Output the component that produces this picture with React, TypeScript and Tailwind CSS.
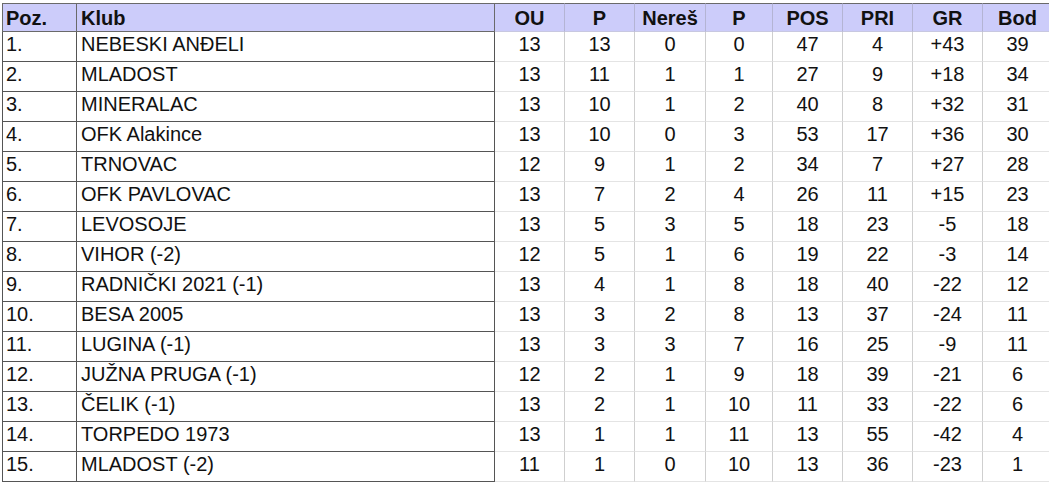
import React from "react";

const rows: [string, string, string, string, string, string, string, string, string, string][] = [
  ["1.", "NEBESKI ANĐELI", "13", "13", "0", "0", "47", "4", "+43", "39"],
  ["2.", "MLADOST", "13", "11", "1", "1", "27", "9", "+18", "34"],
  ["3.", "MINERALAC", "13", "10", "1", "2", "40", "8", "+32", "31"],
  ["4.", "OFK Alakince", "13", "10", "0", "3", "53", "17", "+36", "30"],
  ["5.", "TRNOVAC", "12", "9", "1", "2", "34", "7", "+27", "28"],
  ["6.", "OFK PAVLOVAC", "13", "7", "2", "4", "26", "11", "+15", "23"],
  ["7.", "LEVOSOJE", "13", "5", "3", "5", "18", "23", "-5", "18"],
  ["8.", "VIHOR (-2)", "12", "5", "1", "6", "19", "22", "-3", "14"],
  ["9.", "RADNIČKI 2021 (-1)", "13", "4", "1", "8", "18", "40", "-22", "12"],
  ["10.", "BESA 2005", "13", "3", "2", "8", "13", "37", "-24", "11"],
  ["11.", "LUGINA (-1)", "13", "3", "3", "7", "16", "25", "-9", "11"],
  ["12.", "JUŽNA PRUGA (-1)", "12", "2", "1", "9", "18", "39", "-21", "6"],
  ["13.", "ČELIK (-1)", "13", "2", "1", "10", "11", "33", "-22", "6"],
  ["14.", "TORPEDO 1973", "13", "1", "1", "11", "13", "55", "-42", "4"],
  ["15.", "MLADOST (-2)", "11", "1", "0", "10", "13", "36", "-23", "1"],
];

const heads = ["OU", "P", "Nereš", "P", "POS", "PRI", "GR", "Bod"];
const numW = [70, 70, 71, 67, 70, 70, 70, 70];

export default function App() {
  return (
    <div
      className="w-[1049px] h-[488px] overflow-hidden bg-white pl-[2px] pt-[3px] text-[#111]"
      style={{ fontFamily: '"Liberation Sans", Arial, sans-serif' }}
    >
      <table className="border-separate border-spacing-0 text-[20px] leading-none w-[1051px] table-fixed">
        <colgroup>
          <col className="w-[75px]" />
          <col className="w-[418px]" />
          {numW.map((w, i) => (
            <col key={i} style={{ width: w }} />
          ))}
        </colgroup>
        <thead>
          <tr className="h-[29px] bg-[#ccccfa]">
            <th className="border-t border-l border-r border-b border-[#6a6a6a] text-left pl-[3px] font-bold">Poz.</th>
            <th className="border-t border-r border-b border-[#6a6a6a] text-left pl-[4px] font-bold">Klub</th>
            {heads.map((h, i) => (
              <th
                key={i}
                className="border-t border-t-[#6a6a6a] border-r border-r-[#b4b4d4] border-b border-b-[#c8c8e0] text-center font-bold"
              >
                {h}
              </th>
            ))}
          </tr>
        </thead>
        <tbody>
          {rows.map((r, ri) => (
            <tr key={ri} className="h-[30px]">
              <td className="border-l border-r border-b border-[#555] pl-[3px] pb-[5px]">{r[0]}</td>
              <td className="border-r border-b border-[#555] pl-[4px] pb-[5px]">{r[1]}</td>
              {r.slice(2).map((v, ci) => (
                <td key={ci} className="border-r border-r-[#cfcfcf] border-b border-b-[#e4e4e4] text-center pb-[5px]">
                  {v}
                </td>
              ))}
            </tr>
          ))}
        </tbody>
      </table>
    </div>
  );
}
